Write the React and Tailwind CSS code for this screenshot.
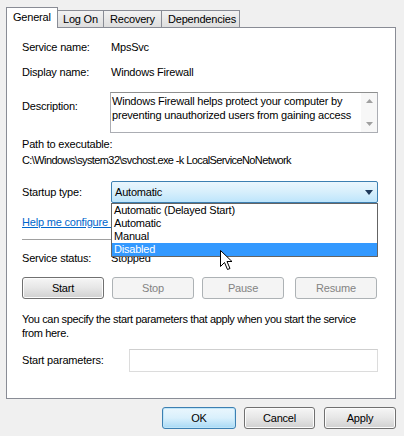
import React from "react";

function Btn({ children, disabled, focus, className = "" }) {
  let cls =
    "flex items-center justify-center rounded-[3px] border h-[22px] " + className + " ";
  if (disabled) cls += "border-[#adb2b5] bg-[#f4f4f4] text-[#838383]";
  else if (focus)
    cls +=
      "border-[#3c7fb1] bg-gradient-to-b from-[#eaf6fd] via-[#d9f0fc] to-[#a7d9f5] text-black shadow-[inset_0_0_0_1px_#bfe5f8]";
  else
    cls +=
      "border-[#707070] bg-gradient-to-b from-[#f6f6f6] via-[#e6e6e6] to-[#d0d0d0] text-black shadow-[inset_0_0_0_1px_#fcfcfc]";
  return <div className={cls}>{children}</div>;
}

function Tab({ children, selected, className = "" }) {
  return selected ? (
    <div
      className={
        "relative z-10 flex h-[21px] items-center whitespace-nowrap border border-b-0 border-[#898c95] bg-white pb-[1px] " +
        className
      }
    >
      {children}
    </div>
  ) : (
    <div
      className={
        "flex h-[18px] items-center whitespace-nowrap border border-l-0 border-[#898c95] bg-gradient-to-b from-[#f2f2f2] to-[#dedede] pt-[1px] " +
        className
      }
    >
      {children}
    </div>
  );
}

export default function App() {
  return (
    <div
      className="relative h-[436px] w-[404px] overflow-hidden bg-[#f0f0f0] text-[11px] leading-[15px] tracking-[-0.2px] text-black"
      style={{ fontFamily: '"Liberation Sans", Arial, sans-serif' }}
    >
      {/* tabs */}
      <div className="flex items-end pl-[6px] pt-[7px]">
        <Tab selected className="w-[52px] pl-[6px]">General</Tab>
        <Tab className="w-[46px] pl-[5px]">Log On</Tab>
        <Tab className="w-[58px] pl-[6px]">Recovery</Tab>
        <Tab className="w-[78px] pl-[6px]">Dependencies</Tab>
      </div>

      {/* panel */}
      <div className="ml-[6px] mt-[-1px] h-[372px] w-[390px] border border-[#898c95] bg-white pl-[15px] pr-[17px]">
        <div className="mt-[12px] flex">
          <div className="w-[89px]">Service name:</div>
          <div>MpsSvc</div>
        </div>
        <div className="mt-[10px] flex">
          <div className="w-[89px]">Display name:</div>
          <div>Windows Firewall</div>
        </div>
        <div className="mt-[12px] flex">
          <div className="w-[88px] pt-[7px]">Description:</div>
          <div className="flex h-[41px] w-[268px] border border-[#abadb3] border-t-[#8e8f8f]">
            <div className="flex-1 pl-[1px] pt-[1px] leading-[14px]">
              Windows Firewall helps protect your computer by preventing unauthorized
              users from gaining access
            </div>
            <div className="flex w-[16px] flex-col items-center justify-between bg-[#f7f7f7] py-[6px]">
              <svg width="7" height="4" viewBox="0 0 7 4">
                <path d="M3.5 0 L7 4 L0 4 Z" fill="#a0a0a0" />
              </svg>
              <svg width="7" height="4" viewBox="0 0 7 4">
                <path d="M0 0 L7 0 L3.5 4 Z" fill="#a0a0a0" />
              </svg>
            </div>
          </div>
        </div>
        <div className="mt-[4px]">Path to executable:</div>
        <div className="mt-[1px] tracking-[-0.6px]">
          C:\Windows\system32\svchost.exe -k LocalServiceNoNetwork
        </div>

        <div className="mt-[13px] flex items-center">
          <div className="w-[89px]">Startup type:</div>
          <div className="flex h-[22px] w-[267px] items-center justify-between rounded-[2px] border border-[#3c7fb1] bg-gradient-to-b from-[#eaf6fd] via-[#d7effc] to-[#bde5fc] pl-[3px] pr-[4px]">
            <span>Automatic</span>
            <svg width="8" height="5" viewBox="0 0 8 5">
              <path d="M0 0 L8 0 L4 5 Z" fill="#1e395b" />
            </svg>
          </div>
        </div>

        <div className="mt-[12px] text-[#0066cc] underline">
          Help me configure service startup options.
        </div>
        <div className="mt-[9px] h-[1px] w-[356px] bg-[#a0a0a0]" />

        <div className="mt-[11px] flex">
          <div className="w-[89px]">Service status:</div>
          <div>Stopped</div>
        </div>

        <div className="mt-[11px] flex">
          <Btn className="w-[82px]">Start</Btn>
          <Btn disabled className="ml-[8px] w-[82px]">Stop</Btn>
          <Btn disabled className="ml-[8px] w-[82px]">Pause</Btn>
          <Btn disabled className="ml-[11px] w-[82px]">Resume</Btn>
        </div>

        <div className="mt-[13px] whitespace-nowrap leading-[14px] tracking-[-0.35px]">
          You can specify the start parameters that apply when you start the service
          <br />
          from here.
        </div>

        <div className="mt-[9px] flex items-center">
          <div className="w-[107px]">Start parameters:</div>
          <div className="h-[23px] w-[249px] border border-[#dcdcdc] border-t-[#cfcfcf] bg-white" />
        </div>
      </div>

      {/* bottom buttons */}
      <div className="mt-[8px] flex justify-end pr-[8px]">
        <Btn focus className="w-[74px]">OK</Btn>
        <Btn className="ml-[8px] w-[71px]">Cancel</Btn>
        <Btn className="ml-[9px] w-[72px]">Apply</Btn>
      </div>

      {/* dropdown list overlay */}
      <div className="absolute left-[111px] top-[203px] w-[267px] border border-[#646464] bg-white leading-[13px]">
        <div className="h-[13px] pl-[2px]">Automatic (Delayed Start)</div>
        <div className="h-[13px] pl-[2px]">Automatic</div>
        <div className="h-[13px] pl-[2px]">Manual</div>
        <div className="h-[13px] bg-[#3399ff] pl-[2px] text-white">Disabled</div>
      </div>

      {/* mouse cursor */}
      <svg
        className="absolute left-[220px] top-[250px]"
        width="13"
        height="21"
        viewBox="0 0 13 21"
      >
        <path
          d="M0.5 0.5 L0.5 16.5 L4.5 12.5 L7.5 19.5 L10 18.5 L7 11.5 L12 11.5 Z"
          fill="white"
          stroke="black"
          strokeWidth="1"
          strokeLinejoin="miter"
        />
      </svg>
    </div>
  );
}
